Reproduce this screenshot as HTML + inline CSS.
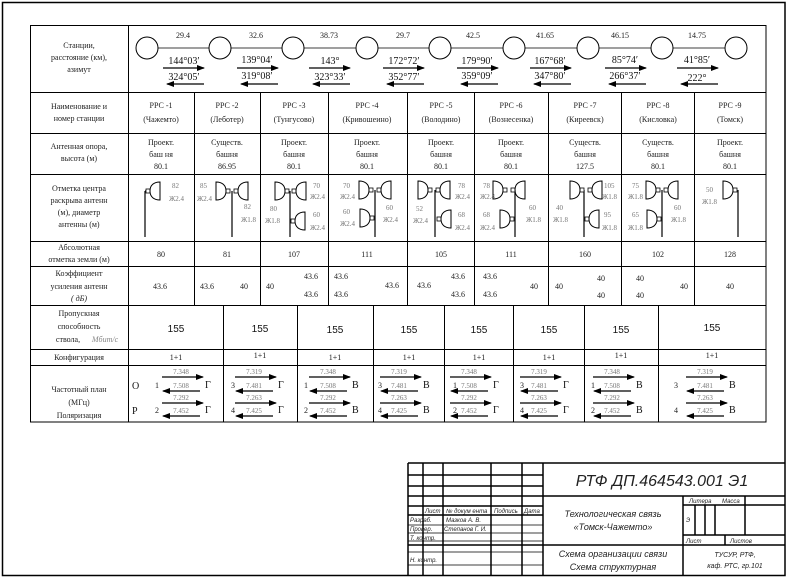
<!DOCTYPE html>
<html><head><meta charset="utf-8"><style>
html,body{margin:0;padding:0;background:#fff;}
svg{display:block;}
.s{font-family:"Liberation Serif",serif;font-size:8px;fill:#222;}
.g{font-family:"Liberation Serif",serif;font-size:7px;fill:#777;}
.m{font-family:"Liberation Serif",serif;font-size:10px;fill:#111;}
.a{font-family:"Liberation Sans",sans-serif;font-size:10px;fill:#111;}
.i{font-family:"Liberation Sans",sans-serif;font-style:italic;fill:#222;}
</style></head><body>
<svg width="789" height="578" viewBox="0 0 789 578" xmlns="http://www.w3.org/2000/svg">
<defs>
<marker id="ah" markerWidth="8" markerHeight="6" refX="7" refY="3" orient="auto" markerUnits="userSpaceOnUse"><path d="M0,0 L8,3 L0,6 Z" fill="#000"/></marker>
<g id="dr"><rect x="-2" y="-2" width="4" height="4" fill="#fff" stroke="#000" stroke-width="0.8"/><path d="M2,0 C2,-6 6,-9 12,-9 L12,9 C6,9 2,6 2,0 Z" fill="none" stroke="#000" stroke-width="1"/></g>
<g id="dl"><use href="#dr" transform="scale(-1,1)"/></g>
</defs>
<g fill="none" stroke="#000">
<rect x="2.5" y="2.5" width="782.5" height="573" stroke-width="1.5"/>
<rect x="30.5" y="25.5" width="735.5" height="396.5" stroke-width="1"/>
<path d="M128.5,25V422 M30,92.5H766 M30,133.5H766 M30,174.5H766 M30,241.5H766 M30,266.5H766 M30,305.5H766 M30,349.5H766 M30,365.5H766"/>
<path d="M194.5,92V305 M260.5,92V305 M328.5,92V305 M407.5,92V305 M474.5,92V305 M548.5,92V305 M621.5,92V305 M694.5,92V305"/>
<path d="M223.5,305V422 M297.5,305V422 M373.5,305V422 M444.5,305V422 M513.5,305V422 M584.5,305V422 M658.5,305V422"/>
<path d="M158,48H209 M231,48H282 M304,48H356 M378,48H429 M451,48H503 M525,48H577 M599,48H651 M673,48H725" stroke-width="0.8"/>
<circle cx="147" cy="48" r="11"/><circle cx="220" cy="48" r="11"/><circle cx="293" cy="48" r="11"/><circle cx="367" cy="48" r="11"/><circle cx="440" cy="48" r="11"/><circle cx="514" cy="48" r="11"/><circle cx="588" cy="48" r="11"/><circle cx="662" cy="48" r="11"/><circle cx="736" cy="48" r="11"/>
</g>
<g stroke="#000" stroke-width="1.3" marker-end="url(#ah)">
<line x1="163" y1="68" x2="204" y2="68"/><line x1="204" y1="84" x2="167" y2="84"/>
<line x1="237" y1="68" x2="278" y2="68"/><line x1="278" y1="84" x2="241" y2="84"/>
<line x1="309" y1="68" x2="350" y2="68"/><line x1="350" y1="84" x2="313" y2="84"/>
<line x1="383" y1="68" x2="424" y2="68"/><line x1="424" y1="84" x2="387" y2="84"/>
<line x1="457" y1="68" x2="498" y2="68"/><line x1="498" y1="84" x2="461" y2="84"/>
<line x1="530" y1="68" x2="571" y2="68"/><line x1="571" y1="84" x2="534" y2="84"/>
<line x1="605" y1="68" x2="646" y2="68"/><line x1="646" y1="84" x2="609" y2="84"/>
<line x1="677" y1="68" x2="718" y2="68"/><line x1="718" y1="84" x2="681" y2="84"/>
</g>
<g class="s" text-anchor="middle">
<text x="183" y="38">29.4</text><text x="256" y="38">32.6</text><text x="329" y="38">38.73</text><text x="403" y="38">29.7</text><text x="473" y="38">42.5</text><text x="545" y="38">41.65</text><text x="620" y="38">46.15</text><text x="697" y="38">14.75</text>
</g>
<g class="m" text-anchor="middle">
<text x="184" y="64">144°03′</text><text x="184" y="80">324°05′</text>
<text x="257" y="63">139°04′</text><text x="257" y="79">319°08′</text>
<text x="330" y="64">143°</text><text x="330" y="80">323°33′</text>
<text x="404" y="64">172°72′</text><text x="404" y="80">352°77′</text>
<text x="477" y="64">179°90′</text><text x="477" y="79">359°09′</text>
<text x="550" y="64">167°68′</text><text x="550" y="79">347°80′</text>
<text x="625" y="63">85°74′</text><text x="625" y="79">266°37′</text>
<text x="697" y="63">41°85′</text><text x="697" y="81">222°</text>
</g>
<g class="s" text-anchor="middle">
<text x="79" y="48">Станции,</text><text x="79" y="60">расстояние (км),</text><text x="79" y="72">азимут</text>
<text x="79" y="109">Наименование и</text><text x="79" y="121">номер станции</text>
<text x="79" y="149">Антенная опора,</text><text x="79" y="161">высота (м)</text>
<text x="79" y="191">Отметка центра</text><text x="79" y="203">раскрыва антенн</text><text x="79" y="215">(м), диаметр</text><text x="79" y="227">антенны (м)</text>
<text x="79" y="250">Абсолютная</text><text x="79" y="262">отметка земли (м)</text>
<text x="79" y="276">Коэффициент</text><text x="79" y="289">усиления антенн</text><text x="79" y="301" font-style="italic">( дБ)</text>
<text x="79" y="316">Пропускная</text><text x="79" y="329">способность</text><text x="68" y="342">ствола,</text><text x="105" y="342" font-style="italic" fill="#888">Мбит/с</text>
<text x="79" y="360">Конфигурация</text>
<text x="79" y="392">Частотный план</text><text x="79" y="405">(МГц)</text><text x="79" y="418">Поляризация</text>
</g>
<g class="s" text-anchor="middle">
<text x="161" y="108">РРС -1</text><text x="161" y="122">(Чажемто)</text>
<text x="227" y="108">РРС -2</text><text x="227" y="122">(Леботер)</text>
<text x="294" y="108">РРС -3</text><text x="294" y="122">(Тунгусово)</text>
<text x="367" y="108">РРС -4</text><text x="367" y="122">(Кривошеино)</text>
<text x="441" y="108">РРС -5</text><text x="441" y="122">(Володино)</text>
<text x="511" y="108">РРС -6</text><text x="511" y="122">(Вознесенка)</text>
<text x="585" y="108">РРС -7</text><text x="585" y="122">(Киреевск)</text>
<text x="658" y="108">РРС -8</text><text x="658" y="122">(Кисловка)</text>
<text x="730" y="108">РРС -9</text><text x="730" y="122">(Томск)</text>
<text x="161" y="145">Проект.</text><text x="161" y="157">баш ня</text><text x="161" y="169">80.1</text>
<text x="227" y="145">Существ.</text><text x="227" y="157">башня</text><text x="227" y="169">86.95</text>
<text x="294" y="145">Проект.</text><text x="294" y="157">башня</text><text x="294" y="169">80.1</text>
<text x="367" y="145">Проект.</text><text x="367" y="157">башня</text><text x="367" y="169">80.1</text>
<text x="441" y="145">Проект.</text><text x="441" y="157">башня</text><text x="441" y="169">80.1</text>
<text x="511" y="145">Проект.</text><text x="511" y="157">башня</text><text x="511" y="169">80.1</text>
<text x="585" y="145">Существ.</text><text x="585" y="157">башня</text><text x="585" y="169">127.5</text>
<text x="658" y="145">Существ.</text><text x="658" y="157">башня</text><text x="658" y="169">80.1</text>
<text x="730" y="145">Проект.</text><text x="730" y="157">башня</text><text x="730" y="169">80.1</text>
<text x="161" y="257">80</text><text x="227" y="257">81</text><text x="294" y="257">107</text><text x="367" y="257">111</text><text x="441" y="257">105</text><text x="511" y="257">111</text><text x="585" y="257">160</text><text x="658" y="257">102</text><text x="730" y="257">128</text>
</g>
<g class="s">
<text x="153" y="289">43.6</text>
<text x="200" y="289">43.6</text><text x="240" y="289">40</text>
<text x="266" y="289">40</text><text x="304" y="279">43.6</text><text x="304" y="297">43.6</text>
<text x="334" y="279">43.6</text><text x="334" y="297">43.6</text><text x="385" y="288">43.6</text>
<text x="417" y="288">43.6</text><text x="451" y="279">43.6</text><text x="451" y="297">43.6</text>
<text x="483" y="279">43.6</text><text x="483" y="297">43.6</text><text x="530" y="289">40</text>
<text x="555" y="289">40</text><text x="597" y="281">40</text><text x="597" y="298">40</text>
<text x="636" y="281">40</text><text x="636" y="298">40</text><text x="680" y="289">40</text>
<text x="726" y="289">40</text>
</g>
<g stroke="#000" stroke-width="1.2">
<line x1="145" y1="191" x2="145" y2="237"/><line x1="232" y1="191" x2="232" y2="237"/><line x1="290" y1="191" x2="290" y2="237"/><line x1="375" y1="190" x2="375" y2="237"/><line x1="435" y1="190" x2="435" y2="237"/><line x1="515" y1="190" x2="515" y2="237"/><line x1="584" y1="190" x2="584" y2="237"/><line x1="662" y1="190" x2="662" y2="237"/><line x1="738" y1="190" x2="738" y2="237"/>
<line x1="145" y1="191" x2="148" y2="191"/>
</g>
<g>
<use href="#dr" x="148" y="191"/>
<use href="#dl" x="228" y="191"/><use href="#dr" x="236" y="191"/>
<use href="#dl" x="287" y="191"/><use href="#dr" x="294" y="191"/><use href="#dr" x="293" y="221"/>
<use href="#dl" x="371" y="190"/><use href="#dr" x="379" y="190"/><use href="#dl" x="372" y="218"/>
<use href="#dl" x="430" y="190"/><use href="#dr" x="438" y="190"/><use href="#dr" x="439" y="219"/>
<use href="#dl" x="505" y="190"/><use href="#dr" x="513" y="190"/><use href="#dl" x="512" y="219"/>
<use href="#dl" x="582" y="190"/><use href="#dr" x="590" y="190"/><use href="#dr" x="587" y="219"/>
<use href="#dl" x="658" y="190"/><use href="#dr" x="666" y="190"/><use href="#dl" x="659" y="219"/>
<use href="#dl" x="735" y="190"/>
</g>
<g class="g">
<text x="172" y="188">82</text><text x="169" y="201">Ж2.4</text>
<text x="200" y="188">85</text><text x="197" y="201">Ж2.4</text><text x="244" y="209">82</text><text x="241" y="222">Ж1.8</text>
<text x="313" y="188">70</text><text x="310" y="199">Ж2.4</text><text x="270" y="211">80</text><text x="265" y="223">Ж1.8</text><text x="313" y="217">60</text><text x="310" y="230">Ж2.4</text>
<text x="343" y="188">70</text><text x="340" y="199">Ж2.4</text><text x="343" y="214">60</text><text x="340" y="226">Ж2.4</text><text x="386" y="210">60</text><text x="383" y="222">Ж2.4</text>
<text x="458" y="188">78</text><text x="455" y="199">Ж2.4</text><text x="416" y="211">52</text><text x="413" y="223">Ж2.4</text><text x="458" y="217">68</text><text x="455" y="230">Ж2.4</text>
<text x="483" y="188">78</text><text x="480" y="199">Ж2.4</text><text x="529" y="210">60</text><text x="526" y="222">Ж1.8</text><text x="483" y="217">68</text><text x="480" y="230">Ж2.4</text>
<text x="604" y="188">105</text><text x="602" y="199">Ж1.8</text><text x="556" y="210">40</text><text x="553" y="222">Ж1.8</text><text x="604" y="217">95</text><text x="602" y="230">Ж1.8</text>
<text x="632" y="188">75</text><text x="628" y="199">Ж1.8</text><text x="674" y="210">60</text><text x="671" y="222">Ж1.8</text><text x="632" y="217">65</text><text x="628" y="230">Ж1.8</text>
<text x="706" y="192">50</text><text x="702" y="204">Ж1.8</text>
</g>
<g class="a" text-anchor="middle">
<text x="176" y="332">155</text><text x="260" y="332">155</text><text x="335" y="333">155</text><text x="409" y="333">155</text><text x="479" y="333">155</text><text x="549" y="333">155</text><text x="621" y="333">155</text><text x="712" y="331">155</text>
</g>
<g class="s" text-anchor="middle">
<text x="176" y="360">1+1</text><text x="260" y="358">1+1</text><text x="335" y="360">1+1</text><text x="409" y="360">1+1</text><text x="479" y="360">1+1</text><text x="549" y="360">1+1</text><text x="621" y="358">1+1</text><text x="712" y="358">1+1</text>
</g>
<text x="132" y="389" class="m" font-size="12">О</text><text x="132" y="414" class="m" font-size="12">Р</text>
<g id="fp1">
<g stroke="#000" stroke-width="1.3"><line x1="162" y1="377" x2="203" y2="377" marker-end="url(#ah)"/><line x1="200" y1="391" x2="163" y2="391" marker-end="url(#ah)"/><line x1="162" y1="403" x2="203" y2="403" marker-end="url(#ah)"/><line x1="200" y1="416" x2="163" y2="416" marker-end="url(#ah)"/></g>
</g>
<use href="#fp1" x="73"/><use href="#fp1" x="147"/><use href="#fp1" x="218"/><use href="#fp1" x="288"/><use href="#fp1" x="358"/><use href="#fp1" x="431"/><use href="#fp1" x="524"/>
<g class="g" text-anchor="middle" font-size="7">
<text x="181" y="374">7.348</text><text x="181" y="388">7.508</text><text x="181" y="400">7.292</text><text x="181" y="413">7.452</text>
<text x="254" y="374">7.319</text><text x="254" y="388">7.481</text><text x="254" y="400">7.263</text><text x="254" y="413">7.425</text>
<text x="328" y="374">7.348</text><text x="328" y="388">7.508</text><text x="328" y="400">7.292</text><text x="328" y="413">7.452</text>
<text x="399" y="374">7.319</text><text x="399" y="388">7.481</text><text x="399" y="400">7.263</text><text x="399" y="413">7.425</text>
<text x="469" y="374">7.348</text><text x="469" y="388">7.508</text><text x="469" y="400">7.292</text><text x="469" y="413">7.452</text>
<text x="539" y="374">7.319</text><text x="539" y="388">7.481</text><text x="539" y="400">7.263</text><text x="539" y="413">7.425</text>
<text x="612" y="374">7.348</text><text x="612" y="388">7.508</text><text x="612" y="400">7.292</text><text x="612" y="413">7.452</text>
<text x="705" y="374">7.319</text><text x="705" y="388">7.481</text><text x="705" y="400">7.263</text><text x="705" y="413">7.425</text>
</g>
<g class="s">
<text x="155" y="388">1</text><text x="155" y="413">2</text><text x="231" y="388">3</text><text x="231" y="413">4</text><text x="304" y="388">1</text><text x="304" y="413">2</text><text x="378" y="388">3</text><text x="378" y="413">4</text><text x="453" y="388">1</text><text x="453" y="413">2</text><text x="520" y="388">3</text><text x="520" y="413">4</text><text x="591" y="388">1</text><text x="591" y="413">2</text><text x="674" y="388">3</text><text x="674" y="413">4</text>
</g>
<g class="m" font-size="10">
<text x="205" y="388">Г</text><text x="205" y="413">Г</text><text x="278" y="388">Г</text><text x="278" y="413">Г</text><text x="352" y="388">В</text><text x="352" y="413">В</text><text x="423" y="388">В</text><text x="423" y="413">В</text><text x="493" y="388">Г</text><text x="493" y="413">Г</text><text x="563" y="388">Г</text><text x="563" y="413">Г</text><text x="636" y="388">В</text><text x="636" y="413">В</text><text x="729" y="388">В</text><text x="729" y="413">В</text>
</g>
<g fill="none" stroke="#000" stroke-width="1.5">
<path d="M408,463H785 M408,463V576"/>
<path d="M423,463V576 M443,463V576 M491,463V576 M522,463V576 M543,463V576"/>
<path d="M408,475H543 M408,486H543 M408,496H785 M408,506H543 M408,515H543 M408,545H785"/>
<path d="M683,496V576 M683,505H785 M683,535H785 M695,505V535 M705,505V535 M715,505V535 M745,496V535 M725,535V545"/>
</g>
<g fill="none" stroke="#000" stroke-width="0.7">
<path d="M408,525H543 M408,533H543 M408,541H543 M408,552H543 M408,565H543"/>
</g>
<g class="i" font-size="6">
<text x="425" y="513">Лист</text><text x="446" y="513">№ докум ента</text><text x="494" y="513">Подпись</text><text x="524" y="513">Дата</text>
<text x="410" y="522">Разраб.</text><text x="446" y="522">Мазков А. В.</text>
<text x="410" y="531">Провер.</text><text x="444" y="531">Степанов Г. И.</text>
<text x="410" y="540">Т. контр.</text>
<text x="410" y="562">Н. контр.</text>
<text x="689" y="503">Литера</text><text x="722" y="503">Масса</text>
<text x="686" y="522">Э</text>
<text x="686" y="543">Лист</text><text x="730" y="543">Листов</text>
</g>
<text x="662" y="486" class="i" font-size="16" text-anchor="middle">РТФ ДП.464543.001 Э1</text>
<text x="613" y="517" class="i" font-size="9" text-anchor="middle">Технологическая связь</text>
<text x="613" y="530" class="i" font-size="9" text-anchor="middle">«Томск-Чажемто»</text>
<text x="613" y="557" class="i" font-size="9" text-anchor="middle">Схема организации связи</text>
<text x="613" y="570" class="i" font-size="9" text-anchor="middle">Схема структурная</text>
<text x="735" y="557" class="i" font-size="7" text-anchor="middle">ТУСУР, РТФ,</text>
<text x="735" y="568" class="i" font-size="7" text-anchor="middle">каф. РТС, гр.101</text>
</svg>
</body></html>
